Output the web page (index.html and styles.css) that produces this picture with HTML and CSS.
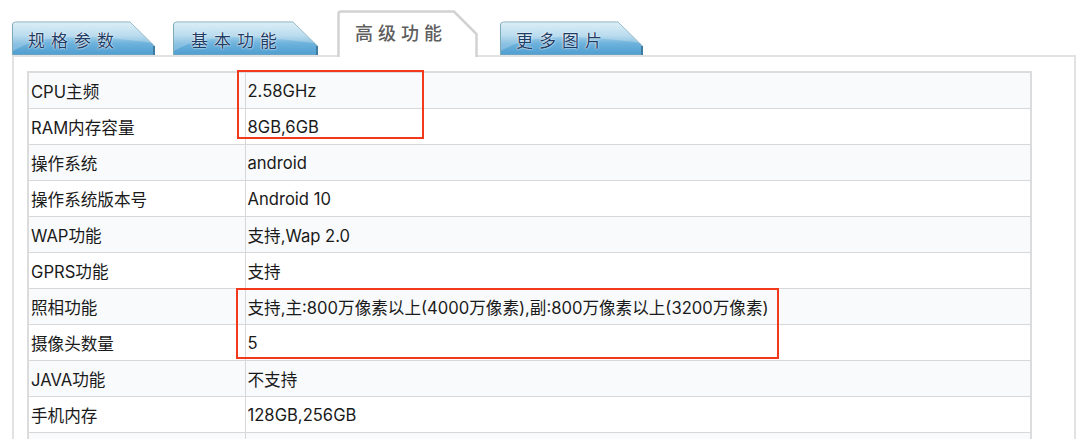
FILE: index.html
```html
<!DOCTYPE html>
<html lang="zh">
<head>
<meta charset="utf-8">
<title>高级功能</title>
<link rel="stylesheet" href="styles.css">
</head>
<body>
<div class="tabs">
  <div class="tab tab-blue tab-1">
    <svg class="tab-bg" width="143" height="34" viewBox="0 0 143 34">
      <defs>
        <linearGradient id="gb" x1="0" y1="0" x2="0" y2="1">
          <stop offset="0" stop-color="#d3eaf4"/>
          <stop offset="0.4" stop-color="#a9d3ea"/>
          <stop offset="0.65" stop-color="#6db2dc"/>
          <stop offset="1" stop-color="#4f9dd0"/>
        </linearGradient>
      </defs>
      <path d="M0.5,34 V4 Q0.5,1 3.5,1 H118 L142.5,25 V34 Z" fill="url(#gb)" stroke="#7eaab8" stroke-width="1"/>
      <path d="M1,30 C30,12 80,14 140,22 L142,25 V8 L118,1 H3 Q1,1 1,4 Z" fill="#ffffff" opacity="0.22"/>
      <path d="M142,25 V34" stroke="#3f7ca0" stroke-width="2"/>
    </svg>
    <span class="tab-label">规格参数</span>
  </div>
  <div class="tab tab-blue tab-2">
    <svg class="tab-bg" width="145" height="34" viewBox="0 0 145 34">
      <defs>
        <linearGradient id="gb2" x1="0" y1="0" x2="0" y2="1">
          <stop offset="0" stop-color="#d3eaf4"/>
          <stop offset="0.4" stop-color="#a9d3ea"/>
          <stop offset="0.65" stop-color="#6db2dc"/>
          <stop offset="1" stop-color="#4f9dd0"/>
        </linearGradient>
      </defs>
      <path d="M0.5,34 V4 Q0.5,1 3.5,1 H120 L144.5,25 V34 Z" fill="url(#gb2)" stroke="#7eaab8" stroke-width="1"/>
      <path d="M1,30 C30,12 80,14 142,22 L144,25 V8 L120,1 H3 Q1,1 1,4 Z" fill="#ffffff" opacity="0.22"/>
      <path d="M144,25 V34" stroke="#3f7ca0" stroke-width="2"/>
    </svg>
    <span class="tab-label">基本功能</span>
  </div>
  <div class="tab tab-active">
    <svg class="tab-bg" width="141" height="47" viewBox="0 0 141 47">
      <path d="M1.5,47 V4 Q1.5,1.5 4,1.5 H117 L139.5,24 V47" fill="#ffffff" stroke="#d2d2d2" stroke-width="2.5"/>
    </svg>
    <span class="tab-label">高级功能</span>
  </div>
  <div class="tab tab-blue tab-4">
    <svg class="tab-bg" width="143" height="34" viewBox="0 0 143 34">
      <defs>
        <linearGradient id="gb4" x1="0" y1="0" x2="0" y2="1">
          <stop offset="0" stop-color="#d3eaf4"/>
          <stop offset="0.4" stop-color="#a9d3ea"/>
          <stop offset="0.65" stop-color="#6db2dc"/>
          <stop offset="1" stop-color="#4f9dd0"/>
        </linearGradient>
      </defs>
      <path d="M0.5,34 V4 Q0.5,1 3.5,1 H118 L142.5,25 V34 Z" fill="url(#gb4)" stroke="#7eaab8" stroke-width="1"/>
      <path d="M1,30 C30,12 80,14 140,22 L142,25 V8 L118,1 H3 Q1,1 1,4 Z" fill="#ffffff" opacity="0.22"/>
      <path d="M142,25 V34" stroke="#3f7ca0" stroke-width="2"/>
    </svg>
    <span class="tab-label">更多图片</span>
  </div>
</div>

<div class="panel">
  <table class="spec">
    <colgroup><col class="c-label"><col class="c-value"></colgroup>
    <tr><td>CPU主频</td><td>2.58GHz</td></tr>
    <tr><td>RAM内存容量</td><td>8GB,6GB</td></tr>
    <tr><td>操作系统</td><td>android</td></tr>
    <tr><td>操作系统版本号</td><td>Android 10</td></tr>
    <tr><td>WAP功能</td><td>支持,Wap 2.0</td></tr>
    <tr><td>GPRS功能</td><td>支持</td></tr>
    <tr><td>照相功能</td><td>支持,主:800万像素以上(4000万像素),副:800万像素以上(3200万像素)</td></tr>
    <tr><td>摄像头数量</td><td>5</td></tr>
    <tr><td>JAVA功能</td><td>不支持</td></tr>
    <tr><td>手机内存</td><td>128GB,256GB</td></tr>
    <tr><td>&nbsp;</td><td>&nbsp;</td></tr>
  </table>
  <div class="mark mark-1"></div>
  <div class="mark mark-2"></div>
</div>
</body>
</html>
```
FILE: styles.css
```css
html, body {
  margin: 0;
  padding: 0;
  background: #ffffff;
  overflow: hidden;
}
body {
  width: 1080px;
  height: 439px;
  font-family: "Inter", "Noto Sans CJK SC", sans-serif;
  color: #1a1a1a;
}
.tabs {
  display: flex;
  align-items: flex-end;
  height: 55px;
  padding-left: 12px;
  box-sizing: border-box;
}
.tab {
  position: relative;
  display: flex;
  align-items: center;
  box-sizing: border-box;
}
.tab-bg {
  position: absolute;
  left: 0;
  top: 0;
  display: block;
}
.tab-label {
  position: relative;
  font-family: "Noto Sans CJK SC", sans-serif;
  font-size: 17px;
  letter-spacing: 6px;
  line-height: 1;
}
.tab-blue {
  width: 143px;
  height: 34px;
  padding: 3px 0 0 16px;
}
.tab-blue .tab-label {
  color: #1d3d66;
  font-weight: 400;
  text-shadow: 0 0 2px #ffffff, 0 0 1px #ffffff;
}
.tab-1 { margin-right: 18px; }
.tab-2 { width: 145px; margin-right: 19px; padding-left: 18px; }
.tab-active {
  width: 141px;
  height: 47px;
  margin-right: 22px;
  margin-bottom: -2px;
  z-index: 2;
  align-items: flex-start;
  padding: 13px 0 0 18px;
}
.tab-active .tab-label {
  color: #5e5e5e;
  font-weight: 500;
  font-size: 18px;
  letter-spacing: 5px;
}
.tab-4 { padding-left: 16px; }

.panel {
  position: relative;
  margin-left: 12px;
  width: 1064px;
  height: 384px;
  overflow: hidden;
  box-sizing: border-box;
  border: 2px solid #e2e2e2;
  border-bottom: none;
  padding: 14px 0 0 13px;
}
.spec {
  border-collapse: collapse;
  width: 1005px;
  border: 2px solid #dcdcdc;
  font-size: 16.6px;
}
.c-label { width: 217px; }
.spec td {
  height: 35px;
  padding: 0 0 0 2px;
  border: 1px solid #d8d8d8;
  white-space: nowrap;
  vertical-align: middle;
}
.spec tr:nth-child(odd) td { background: #f9fafc; }
.spec tr:nth-child(even) td { background: #ffffff; }

.mark {
  position: absolute;
  border: 2px solid #f3391b;
  box-sizing: border-box;
}
.mark-1 {
  left: 223px;
  top: 13px;
  width: 187px;
  height: 69px;
}
.mark-2 {
  left: 222px;
  top: 231px;
  width: 543px;
  height: 71px;
}
```
